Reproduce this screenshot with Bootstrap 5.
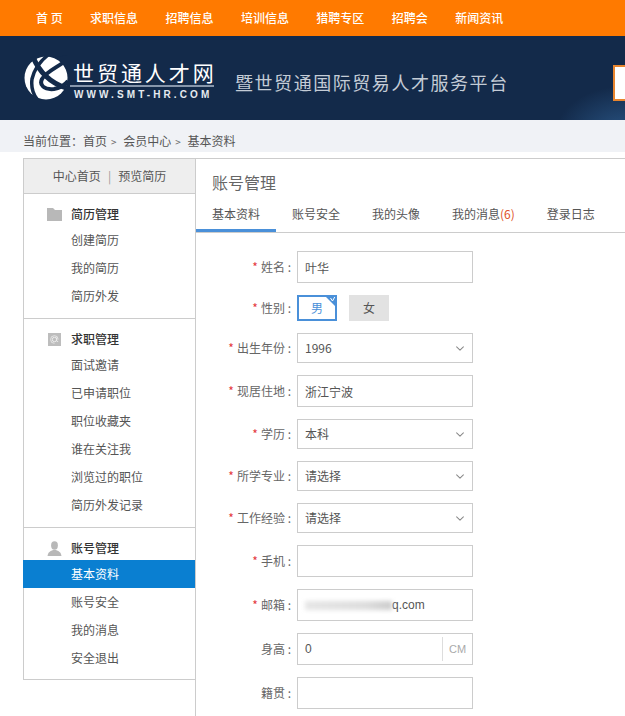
<!DOCTYPE html>
<html lang="zh-CN">
<head>
<meta charset="utf-8">
<title>账号管理</title>
<link href="https://cdn.jsdelivr.net/npm/bootstrap@5.3.0/dist/css/bootstrap.min.css" rel="stylesheet">
<style>
html,body{height:716px;overflow:hidden}
body{font-family:"Microsoft YaHei","Noto Sans CJK SC","Liberation Sans",sans-serif;font-size:12px;color:#555;background:#fff}
a{color:inherit;text-decoration:none}
.topbar{height:36px;background:#ff7a00;padding-left:36px;gap:27.4px;color:#fff;font-weight:500}
.brandbar{height:84px;background:radial-gradient(ellipse 70px 50px at 625px 100px,#2a5585,rgba(42,85,133,0) 100%),#132a4a;padding-left:24px;position:relative}
.logo-mark{width:44px;height:46px;flex:none}
.logo-text{margin-left:2px;width:144px;color:#fff;margin-top:4px}
.logo-cn{font-size:21px;line-height:24px;letter-spacing:2.95px;white-space:nowrap;border-bottom:2px solid #8796ab;padding:0 0 1px 3px;height:27px}
.logo-en{font-family:"Liberation Sans",sans-serif;font-weight:700;font-size:10px;line-height:12px;letter-spacing:3.1px;white-space:nowrap;padding:2px 0 0 4px;color:#e6eaf0}
.slogan{margin-left:21px;font-size:18px;letter-spacing:1.55px;color:#c4ccd6;white-space:nowrap;margin-top:8px}
.search-stub{position:absolute;left:613px;top:29px;width:40px;height:36px;background:#fff;border:2px solid #e8852e}
.crumb{height:32px;background:#f0f2f6;padding:12px 0 0 23px;line-height:18px;color:#555;white-space:nowrap}
.crumb i{font-style:normal;font-size:10px;margin:0 4px;color:#666}
.shell{margin-top:6px;margin-left:23px;border-top:1px solid #ccc;height:558px;overflow:hidden}
.side{width:172px;flex:none;border-left:1px solid #ccc;height:521px;border-bottom:1px solid #ccc}
.side-head{height:35px;background:#eee;border-bottom:1px solid #ccc;color:#555}
.side-head b{font-weight:400;color:#999;margin:0 7px}
.side-group{padding:8px 0;border-bottom:1px solid #ccc}
.side-group:last-child{border-bottom:0}
.side-title{height:24px;padding-left:23px;color:#333;font-weight:500}
.side-title svg{width:15px;height:15px;margin-right:9px;flex:none}
.side-link{height:28px;padding-left:47px;color:#555}
.side-link.on{background:#0a7fd1;color:#fff;margin-left:-1px;padding-left:48px}
.panel{flex:1 1 auto;border-left:1px solid #ccc;min-width:0;height:557px}
.panel-title{font-size:16px;color:#666;padding:13px 0 0 16px;height:47px;line-height:20px}
.tabs-row{border-bottom:1px solid #ccc;height:27px;flex-wrap:nowrap}
.tab-item{padding:0 16px;height:27px;color:#555;white-space:nowrap;line-height:16px}
.tab-item.on{border-bottom:3px solid #4a90d9;height:26px;width:80px}
.tab-item em{font-style:normal;color:#e0512b}
.form-wrap{padding-top:18px;gap:12px}
.field-label{width:101px;flex:none;text-align:right;padding-right:6px;color:#666;white-space:nowrap}
.req{color:#e4393c;margin-right:3px}
.form-control.fx,.form-select.fx{width:176px;height:32px;border-radius:0;border-color:#ccc;font-size:12px;color:#555;padding:0 7px;box-shadow:none}
.form-select.fx{height:30px;padding-right:24px;background-position:right 6px center;background-size:12px 9px;background-image:url("data:image/svg+xml,%3csvg xmlns='http://www.w3.org/2000/svg' viewBox='0 0 16 16'%3e%3cpath fill='none' stroke='%23888' stroke-linecap='round' stroke-linejoin='round' stroke-width='1.8' d='m2 5 6 6 6-6'/%3e%3c/svg%3e")}
.sex-btn{width:40px;height:26px;color:#555;background:#e2e2e2}
.sex-btn.on{background:#fff;border:2px solid #4a90d9;color:#4a90d9;margin-right:12px;overflow:hidden;position:relative}
.sex-tick{position:absolute;right:-2px;top:-2px;width:13px;height:13px}
.mail-box{width:176px;height:32px;border:1px solid #ccc;padding-left:7px;overflow:hidden}
.smudge{display:inline-block;width:87px;height:9px;background:linear-gradient(90deg,#e6e6e6,#ddd 70%,#ccc);filter:blur(2px);flex:none}
.unit-box{width:176px;height:32px;border:1px solid #ccc;padding-left:7px}
.unit-tag{width:30px;height:24px;border-left:1px solid #ddd;color:#aaa;font-family:"Liberation Sans",sans-serif;font-size:11px;line-height:24px;text-align:center}
.num-txt{font-family:"Liberation Sans",sans-serif;font-size:12px;color:#555}
</style>
</head>
<body>
<nav class="topbar d-flex align-items-center">
  <a href="#">首 页</a><a href="#">求职信息</a><a href="#">招聘信息</a><a href="#">培训信息</a><a href="#">猎聘专区</a><a href="#">招聘会</a><a href="#">新闻资讯</a>
</nav>
<header class="brandbar d-flex align-items-center overflow-hidden">
  <svg class="logo-mark" viewBox="0 0 44 46" aria-hidden="true">
    <circle cx="22" cy="23" r="21.5" fill="#fff"/>
    <path d="M9 2C14 14 24 27 42 33" fill="none" stroke="#132a4a" stroke-width="5"/>
    <path d="M24 0C19 4 11 11 8 24C7 32 9 39 13 44" fill="none" stroke="#132a4a" stroke-width="3.5"/>
    <path d="M40 7C32 13 22 17 18 24C15 30 20 35 30 34C36 33 41 30 44 26" fill="none" stroke="#132a4a" stroke-width="4"/>
    <path d="M31 2C35 5 40 9 43 15L46 0Z" fill="#132a4a"/>
  </svg>
  <div class="logo-text">
    <div class="logo-cn">世贸通人才网</div>
    <div class="logo-en">WWW.SMT-HR.COM</div>
  </div>
  <div class="slogan">暨世贸通国际贸易人才服务平台</div>
  <div class="search-stub"></div>
</header>
<div class="crumb">当前位置：首页<i>&gt;</i> 会员中心<i>&gt;</i> 基本资料</div>

<div class="shell d-flex">
  <aside class="side">
    <div class="side-head d-flex align-items-center justify-content-center">中心首页<b>|</b>预览简历</div>
    <div class="side-group">
      <div class="side-title d-flex align-items-center">
        <svg viewBox="0 0 15 15"><path d="M0 1H6L8 3H15V14H0Z" fill="#b8b8b8"/></svg>简历管理
      </div>
      <a class="side-link d-flex align-items-center" href="#">创建简历</a>
      <a class="side-link d-flex align-items-center" href="#">我的简历</a>
      <a class="side-link d-flex align-items-center" href="#">简历外发</a>
    </div>
    <div class="side-group">
      <div class="side-title d-flex align-items-center">
        <svg viewBox="0 0 15 15"><rect x="1" y="1" width="13" height="13" fill="#bdbdbd"/><circle cx="7.5" cy="7.5" r="2.2" fill="none" stroke="#eee"/><path d="M9.7 5.5V8.5Q9.7 10 11.2 9.5M7.5 11.3A3.8 3.8 0 1 1 11.2 7.5" fill="none" stroke="#eee" stroke-width=".8"/></svg>求职管理
      </div>
      <a class="side-link d-flex align-items-center" href="#">面试邀请</a>
      <a class="side-link d-flex align-items-center" href="#">已申请职位</a>
      <a class="side-link d-flex align-items-center" href="#">职位收藏夹</a>
      <a class="side-link d-flex align-items-center" href="#">谁在关注我</a>
      <a class="side-link d-flex align-items-center" href="#">浏览过的职位</a>
      <a class="side-link d-flex align-items-center" href="#">简历外发记录</a>
    </div>
    <div class="side-group">
      <div class="side-title d-flex align-items-center">
        <svg viewBox="0 0 15 15"><ellipse cx="7.5" cy="4.5" rx="3.4" ry="4.2" fill="#b8b8b8"/><path d="M0.5 15C1 11 3.5 10 6 9L9 9C11.5 10 14 11 14.5 15Z" fill="#b8b8b8"/></svg>账号管理
      </div>
      <a class="side-link on d-flex align-items-center" href="#">基本资料</a>
      <a class="side-link d-flex align-items-center" href="#">账号安全</a>
      <a class="side-link d-flex align-items-center" href="#">我的消息</a>
      <a class="side-link d-flex align-items-center" href="#">安全退出</a>
    </div>
  </aside>

  <main class="panel">
    <div class="panel-title">账号管理</div>
    <div class="tabs-row d-flex">
      <a class="tab-item on" href="#">基本资料</a>
      <a class="tab-item" href="#">账号安全</a>
      <a class="tab-item" href="#">我的头像</a>
      <a class="tab-item" href="#">我的消息<em>(6)</em></a>
      <a class="tab-item" href="#">登录日志</a>
    </div>
    <form class="form-wrap d-flex flex-column">
      <div class="d-flex align-items-center">
        <label class="field-label"><span class="req">*</span>姓名 :</label>
        <input class="form-control fx" value="叶华">
      </div>
      <div class="d-flex align-items-center">
        <label class="field-label"><span class="req">*</span>性别 :</label>
        <div class="sex-btn on d-flex align-items-center justify-content-center">男
          <svg class="sex-tick" viewBox="0 0 13 13"><path d="M0 0H13V13Z" fill="#4a90d9"/><path d="M6.5 3L8.5 6L11 1.5" fill="none" stroke="#fff"/></svg>
        </div>
        <div class="sex-btn d-flex align-items-center justify-content-center">女</div>
      </div>
      <div class="d-flex align-items-center">
        <label class="field-label"><span class="req">*</span>出生年份 :</label>
        <select class="form-select fx"><option>1996</option></select>
      </div>
      <div class="d-flex align-items-center">
        <label class="field-label"><span class="req">*</span>现居住地 :</label>
        <input class="form-control fx" value="浙江宁波">
      </div>
      <div class="d-flex align-items-center">
        <label class="field-label"><span class="req">*</span>学历 :</label>
        <select class="form-select fx"><option>本科</option></select>
      </div>
      <div class="d-flex align-items-center">
        <label class="field-label"><span class="req">*</span>所学专业 :</label>
        <select class="form-select fx"><option>请选择</option></select>
      </div>
      <div class="d-flex align-items-center">
        <label class="field-label"><span class="req">*</span>工作经验 :</label>
        <select class="form-select fx"><option>请选择</option></select>
      </div>
      <div class="d-flex align-items-center">
        <label class="field-label"><span class="req">*</span>手机 :</label>
        <input class="form-control fx">
      </div>
      <div class="d-flex align-items-center">
        <label class="field-label"><span class="req">*</span>邮箱 :</label>
        <div class="mail-box d-flex align-items-center"><span class="smudge"></span><span class="num-txt">q.com</span></div>
      </div>
      <div class="d-flex align-items-center">
        <label class="field-label">身高 :</label>
        <div class="unit-box d-flex align-items-center justify-content-between"><span class="num-txt">0</span><span class="unit-tag">CM</span></div>
      </div>
      <div class="d-flex align-items-center">
        <label class="field-label">籍贯 :</label>
        <input class="form-control fx">
      </div>
    </form>
  </main>
</div>
<script src="https://cdn.jsdelivr.net/npm/bootstrap@5.3.0/dist/js/bootstrap.bundle.min.js"></script>
</body>
</html>
